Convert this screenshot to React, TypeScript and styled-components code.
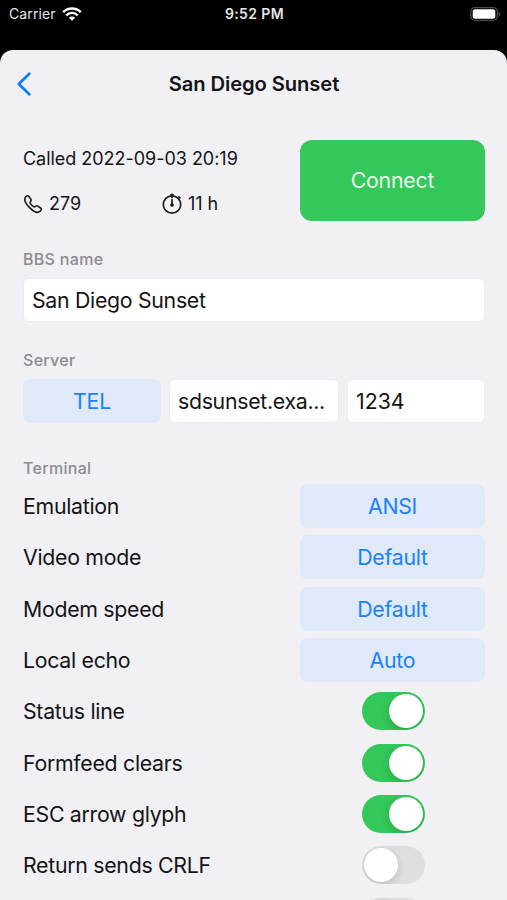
import React from "react";
import styled, { createGlobalStyle } from "styled-components";

const GlobalStyle = createGlobalStyle`
  * { box-sizing: border-box; }
  html, body { margin: 0; padding: 0; background: #000; overflow: hidden; }
  body { font-family: Inter, "Liberation Sans", sans-serif; color: #141416; }
  button { font: inherit; margin: 0; }
`;

const Screen = styled.div`
  width: 507px;
  height: 900px;
  display: flex;
  flex-direction: column;
  overflow: hidden;
  background: #000;
`;

const StatusBar = styled.header`
  flex: none;
  height: 50px;
  padding: 0 6px 0 9px;
  display: grid;
  grid-template-columns: 1fr auto 1fr;
  align-items: start;
  color: #e6e6e6;
  font-size: 14px;
`;

const Carrier = styled.div`
  display: flex;
  align-items: center;
  gap: 6px;
  height: 27px;
  letter-spacing: 0.1px;
`;

const Clock = styled.div`
  height: 27px;
  line-height: 28px;
  font-weight: 600;
  letter-spacing: 0.4px;
  margin-right: 1px;
`;

const BatterySlot = styled.div`
  display: flex;
  justify-content: flex-end;
  align-items: center;
  height: 27px;
`;

const Sheet = styled.main`
  flex: none;
  height: 900px;
  background: #f1f0f5;
  border-radius: 13px 13px 0 0;
  padding: 0 22px 0 23px;
  display: flex;
  flex-direction: column;
`;

const NavBar = styled.nav`
  height: 68px;
  display: grid;
  grid-template-columns: 40px 1fr 40px;
  align-items: center;
`;

const BackButton = styled.button`
  width: 30px;
  height: 40px;
  margin-left: -10px;
  padding: 0;
  border: 0;
  background: none;
  display: flex;
  align-items: center;
`;

const Title = styled.h1`
  margin: 0 0 1px;
  text-align: center;
  font-size: 20.2px;
  font-weight: 600;
  letter-spacing: -0.1px;
`;

const Summary = styled.section`
  margin-top: 22px;
  display: flex;
  justify-content: space-between;
  height: 81px;
`;

const Stats = styled.div`
  width: 277px;
  display: flex;
  flex-direction: column;
  gap: 21px;
  padding-top: 7px;
  font-size: 18px;
  line-height: 24px;
  letter-spacing: -0.03px;
`;

const StatRow = styled.div`
  display: grid;
  grid-template-columns: 139px 1fr;
`;

const Stat = styled.span`
  display: flex;
  align-items: center;
  gap: 6px;
`;

const ConnectButton = styled.button`
  width: 185px;
  height: 81px;
  padding: 0 0 1px;
  border: 0;
  border-radius: 12px;
  background: #34c759;
  color: #e9faed;
  font-size: 21.3px;
  letter-spacing: -0.2px;
`;

const Caption = styled.h2<{ $top: number }>`
  margin: ${(p) => p.$top}px 0 0;
  height: 22px;
  line-height: 22px;
  font-size: 16px;
  font-weight: 500;
  letter-spacing: 0.3px;
  color: #8b8b90;
`;

const FieldRow = styled.div`
  margin-top: 8px;
  display: grid;
  grid-template-columns: 138px 170px 138px;
  gap: 8px;
`;

const TextField = styled.div<{ $track?: number }>`
  height: 44px;
  line-height: 43px;
  padding: 0 8px;
  border: 1px solid #ececf0;
  border-radius: 6px;
  background: #fff;
  font-size: 21.3px;
  letter-spacing: ${(p) => p.$track ?? -0.3}px;
  white-space: nowrap;
`;

const NameField = styled(TextField)`
  margin-top: 8px;
`;

const MenuButton = styled.button`
  width: 100%;
  height: 44px;
  border: 0;
  border-radius: 8px;
  background: #dfe9f7;
  color: #1a82f7;
  font-size: 21.3px;
  letter-spacing: -0.25px;
`;

const Options = styled.div`
  margin-top: 5px;
  display: grid;
  grid-auto-rows: 44px;
  row-gap: 7.35px;
`;

const Option = styled.div`
  display: grid;
  grid-template-columns: 1fr 185px;
  align-items: center;
`;

const OptionLabel = styled.span`
  font-size: 21.3px;
  letter-spacing: -0.29px;
`;

const Switch = styled.button<{ $on: boolean }>`
  justify-self: center;
  margin-left: 2px;
  width: 63px;
  height: 38px;
  padding: 2px;
  border: 0;
  border-radius: 19px;
  overflow: hidden;
  display: flex;
  justify-content: ${(p) => (p.$on ? "flex-end" : "flex-start")};
  background: ${(p) => (p.$on ? "#34c759" : "#dfdfe3")};
`;

const Knob = styled.span`
  width: 34px;
  height: 34px;
  border-radius: 50%;
  background: #fff;
  box-shadow: 0 3px 8px rgba(0, 0, 0, 0.16);
`;

const WifiIcon = () => (
  <svg width="20" height="14" viewBox="0 0 20 14" fill="none" stroke="#fff" strokeWidth="2.4">
    <path d="M1.2 5.2a12.4 12.4 0 0 1 17.6 0" />
    <path d="M4.3 8.3a8 8 0 0 1 11.4 0" />
    <path d="M10 13.7 6.9 10.7a4.3 4.3 0 0 1 6.2 0z" fill="#fff" stroke="none" />
  </svg>
);

const BatteryIcon = () => (
  <svg width="31" height="14" viewBox="0 0 31 14">
    <rect x="0.8" y="0.7" width="26.6" height="12.6" rx="4" fill="none" stroke="#4c4c4e" strokeWidth="1.3" />
    <rect x="2.7" y="2.3" width="22.6" height="9.4" rx="2.3" fill="#fff" />
    <path d="M28.8 4.8a2.5 2.5 0 0 1 0 4.4z" fill="#5b5b5d" />
  </svg>
);

const BackIcon = () => (
  <svg width="20" height="26" viewBox="0 0 20 26" fill="none" stroke="#0a7aff" strokeWidth="2.7" strokeLinecap="round" strokeLinejoin="round">
    <path d="M16.3 2.8 5.800 13 16.300 23.200" />
  </svg>
);

const PhoneIcon = () => (
  <svg width="20" height="20" viewBox="0 0 20 20" fill="none" stroke="#1c1c1e" strokeWidth="1.6" strokeLinejoin="round">
    <path d="M2.600 3.100C3.800 1.600 5 1.200 6 2.500l1.800 2.600c.7 1 .5 1.800-.3 2.600-.6.6-.7 1-.2 1.700.9 1.300 2 2.400 3.300 3.300.7.5 1.100.4 1.700-.2.8-.8 1.600-1 2.600-.3l2.600 1.800c1.300.9.9 2.200-.6 3.400-2.300 1.900-6 .5-10-3.500S.7 5.500 2.600 3.100z" />
  </svg>
);

const TimerIcon = () => (
  <svg width="20" height="22" viewBox="0 0 20 22" fill="none" stroke="#1c1c1e" strokeWidth="1.7" strokeLinecap="round">
    <circle cx="10" cy="11.5" r="8.7" />
    <path d="M10 1.500v3M9 1.500h2M16.900 3.800l1 1" />
    <path d="M10 6.500v5" />
    <circle cx="10" cy="12" r="1" fill="#1c1c1e" />
  </svg>
);

const menus = [
  ["Emulation", "ANSI"],
  ["Video mode", "Default"],
  ["Modem speed", "Default"],
  ["Local echo", "Auto"],
];

const switches: [string, boolean][] = [
  ["Status line", true],
  ["Formfeed clears", true],
  ["ESC arrow glyph", true],
  ["Return sends CRLF", false],
  ["", false],
];

export default function App() {
  return (
    <Screen>
      <GlobalStyle />
      <StatusBar>
        <Carrier>
          Carrier
          <WifiIcon />
        </Carrier>
        <Clock>9:52 PM</Clock>
        <BatterySlot>
          <BatteryIcon />
        </BatterySlot>
      </StatusBar>
      <Sheet>
        <NavBar>
          <BackButton aria-label="Back">
            <BackIcon />
          </BackButton>
          <Title>San Diego Sunset</Title>
        </NavBar>
        <Summary>
          <Stats>
            <div>Called 2022-09-03 20:19</div>
            <StatRow>
              <Stat>
                <PhoneIcon />
                279
              </Stat>
              <Stat>
                <TimerIcon />
                11 h
              </Stat>
            </StatRow>
          </Stats>
          <ConnectButton>Connect</ConnectButton>
        </Summary>
        <Caption $top={27}>BBS name</Caption>
        <NameField>San Diego Sunset</NameField>
        <Caption $top={27}>Server</Caption>
        <FieldRow>
          <MenuButton>TEL</MenuButton>
          <TextField>sdsunset.exa...</TextField>
          <TextField $track={0}>1234</TextField>
        </FieldRow>
        <Caption $top={34}>Terminal</Caption>
        <Options>
          {menus.map(([label, value]) => (
            <Option key={label}>
              <OptionLabel>{label}</OptionLabel>
              <MenuButton>{value}</MenuButton>
            </Option>
          ))}
          {switches.map(([label, on]) => (
            <Option key={label}>
              <OptionLabel>{label}</OptionLabel>
              <Switch $on={on} role="switch" aria-checked={on}>
                <Knob />
              </Switch>
            </Option>
          ))}
        </Options>
      </Sheet>
    </Screen>
  );
}
